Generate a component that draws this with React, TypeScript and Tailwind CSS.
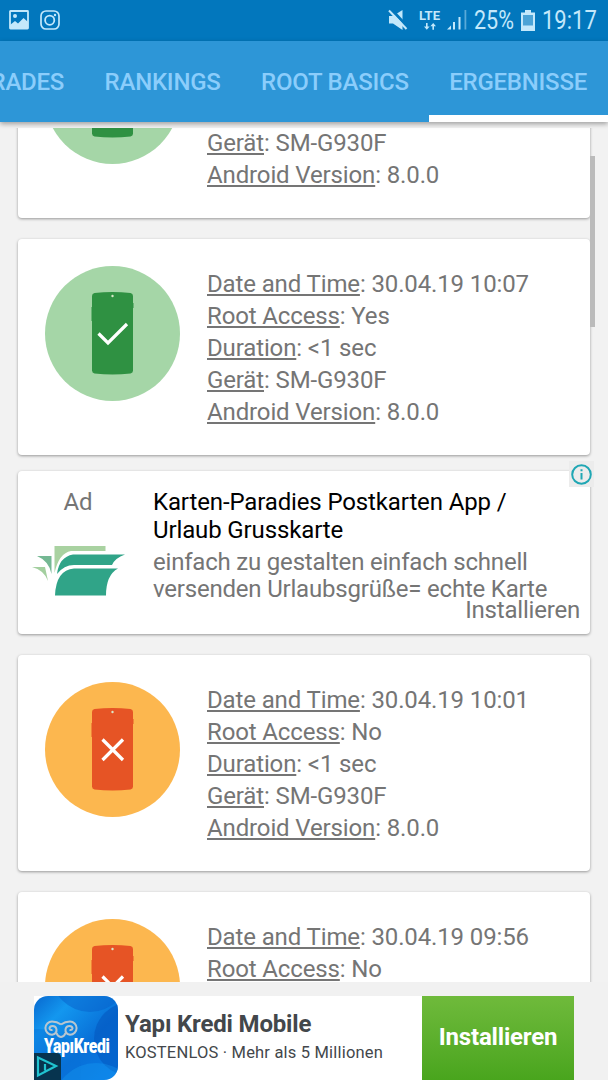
import clsx from 'clsx'

interface Result {
  date: string
  root: boolean
}

interface ResultCardProps {
  result: Result
  className?: string
}

const tabs = ['UPGRADES', 'RANKINGS', 'ROOT BASICS', 'ERGEBNISSE']

const results: Result[] = [
  { date: '30.04.19 10:09', root: true },
  { date: '30.04.19 10:07', root: true },
  { date: '30.04.19 10:01', root: false },
  { date: '30.04.19 09:56', root: false },
]

const cardClass = 'shrink-0 rounded-[4px] bg-white shadow-[0_1px_3px_rgba(0,0,0,0.38)]'

function StatusBar() {
  return (
    <header className="flex h-[41px] shrink-0 items-center bg-[#0277bd] pb-px pl-[9px] pr-[11px] text-[#c3e8fb]">
      <svg className="h-5 w-5" viewBox="0 0 20 20" fill="none">
        <rect x="1" y="1" width="18" height="17.5" rx="0.5" stroke="currentColor" strokeWidth="1.8" />
        <circle cx="6" cy="6" r="2" fill="currentColor" />
        <path d="M1 15 6 11l3 2.5L14.500 8 19 12v6.500H1Z" fill="currentColor" />
      </svg>
      <svg className="ml-[11px] h-5 w-5" viewBox="0 0 20 20" fill="none" stroke="currentColor">
        <rect x="1" y="1" width="18" height="18" rx="5" strokeWidth="1.7" />
        <circle cx="9.700" cy="10.200" r="4.600" strokeWidth="1.800" />
        <circle cx="15" cy="5" r="1.200" fill="currentColor" stroke="none" />
      </svg>

      <div className="ml-auto flex items-center">
        <svg className="h-[22px] w-5" viewBox="0 0 20 22">
          <path d="M1 7h4l9.500-6v20L5 14.500H1Z" fill="currentColor" />
          <path d="M3 0 20 18.500" stroke="#0277bd" strokeWidth="3" />
          <path d="M1 1.500 18.500 20" stroke="currentColor" strokeWidth="2" />
        </svg>
        <div className="ml-[10px] flex w-[23px] flex-col items-center">
          <span className="text-[13px] font-bold leading-[11px]">LTE</span>
          <svg className="mt-[2px] h-[7px] w-3" viewBox="0 0 12 7" fill="currentColor">
            <path d="M2 0h1.600v3.500h2L2.800 6.800 0 3.500h2ZM8.400 6.800H10V3.300h2L9.200 0 6.400 3.300h2Z" />
          </svg>
        </div>
        <svg className="ml-[5px] h-5 w-[21px]" viewBox="0 0 21 20" fill="currentColor">
          <path d="M1 19.500 5 15.500v4ZM7 12h2v7.500H7ZM12.500 7h2v12.500h-2Z" />
          <path d="M18.500 0h1.800v19.500h-1.800Z" opacity="0.45" />
        </svg>
        <span className="ml-[7px] w-[41px] whitespace-nowrap pt-[2px] text-[25px] leading-[38px]">
          <span className="inline-block origin-left scale-x-[0.86]">25%</span>
        </span>
        <svg className="ml-[6px] h-[21px] w-[14px]" viewBox="0 0 14 21">
          <path d="M4 0h6v2.500h4V21H0V2.500h4Z" fill="currentColor" />
          <path d="M2 5h10v10.500H2Z" fill="#4ba3d6" />
        </svg>
        <span className="ml-[7px] w-[55px] whitespace-nowrap pt-[2px] text-[25px] leading-[38px]">
          <span className="inline-block origin-left scale-x-[0.88]">19:17</span>
        </span>
      </div>
    </header>
  )
}

function TabBar() {
  return (
    <nav className="relative z-10 flex h-[81px] shrink-0 justify-end bg-[#2d96d7] shadow-[0_2px_5px_rgba(0,0,0,0.35)]">
      {tabs.map((tab, i) => (
        <div
          key={tab}
          className={clsx(
            'flex shrink-0 items-center justify-center whitespace-nowrap border-b-[7px] pl-5 pt-[7px] text-[24px] font-medium tracking-[-0.24px] text-[#8bcdfb]',
            i === tabs.length - 1 ? 'border-white pr-[21px]' : 'border-transparent pr-[20.5px]'
          )}
        >
          {tab}
        </div>
      ))}
    </nav>
  )
}

function PhoneBadge({ root }: { root: boolean }) {
  return (
    <svg className="h-[135px] w-[135px] shrink-0" viewBox="0 0 135 135">
      <circle cx="67.5" cy="67.5" r="67.5" fill={root ? '#a5d6a7' : '#fcb74f'} />
      <g fill={root ? '#2f9142' : '#e65425'}>
        <path d="M47 30q0-2.500 2.500-2.900 18-2.200 36 0 2.500.4 2.500 2.900v74.500q0 2.500-2.500 2.900-18 2.200-36 0-2.500-.4-2.500-2.900Z" />
        <path d="M46.500 41h1v14h-1ZM87.500 37h1v5h-1Z" />
      </g>
      <circle cx="67.500" cy="30" r="1.200" fill="#d9e8c8" />
      <path
        d={root ? 'M53.500 67.500 63 77 82 58' : 'M57.500 57.500 78 78M78 57.500 57.500 78'}
        fill="none"
        stroke="#fff"
        strokeWidth="3.2"
      />
    </svg>
  )
}

function ResultCard({ result, className }: ResultCardProps) {
  const rows = [
    ['Date and Time', result.date],
    ['Root Access', result.root ? 'Yes' : 'No'],
    ['Duration', '<1 sec'],
    ['Gerät', 'SM-G930F'],
    ['Android Version', '8.0.0'],
  ]

  return (
    <article className={clsx(cardClass, 'flex h-[216px] gap-[27px] p-[27px]', className)}>
      <PhoneBadge root={result.root} />
      <div className="pt-[2px] text-[24px] leading-8 tracking-[-0.13px] text-[#757575]">
        {rows.map(([label, value]) => (
          <p key={label} className="whitespace-nowrap">
            <span className="underline decoration-[1.5px] underline-offset-[2px]">{label}</span>: {value}
          </p>
        ))}
      </div>
    </article>
  )
}

function NativeAd() {
  return (
    <article className={clsx(cardClass, 'relative mt-4 flex h-[163px]')}>
      <div className="w-[135px] shrink-0 pl-[14px] pt-[15px]">
        <p className="w-[92px] text-center text-[24px] leading-8 text-[#757575]">Ad</p>
        <svg className="mt-[27px] h-[52px] w-[94px]" viewBox="0 0 94 52">
          <path d="M22.500 1H73.500V6H39Q27 8 22.500 28Z" fill="#a9d2a1" />
          <path d="M5 11h14.500v18Q17 16 5 11Z" fill="#74b893" />
          <path d="M0 22h13l3 14Q12 25 0 22Z" fill="#a3cf9f" />
          <path d="M25 29Q27 12 41 9.500H93Q83 13 80 20H42Q32 20 25 29Z" fill="#30a488" />
          <path d="M23 50.500Q24 25 42 23.500H86Q74 30 74 50.500Z" fill="#30a488" />
        </svg>
      </div>
      <div className="text-[24px]">
        <h2 className="whitespace-nowrap pt-[17px] leading-7 tracking-[-0.13px] text-black">
          Karten-Paradies Postkarten App /<br />
          Urlaub Grusskarte
        </h2>
        <p className="mt-[5px] whitespace-nowrap leading-[27px] tracking-[-0.2px] text-[#757575]">
          einfach zu gestalten einfach schnell
          <br />
          versenden Urlaubsgrüße= echte Karte
        </p>
      </div>
      <button className="absolute bottom-2 right-[10px] text-[24px] leading-8 tracking-[-0.2px] text-[#757575]">
        Installieren
      </button>
      <span className="absolute -right-1 -top-[10px] flex h-[26px] w-[25px] items-center justify-center bg-[#ececec]">
        <svg className="h-[21px] w-[21px]" viewBox="0 0 21 21" fill="none" stroke="#20a7b4" strokeWidth="2">
          <circle cx="10.500" cy="10.500" r="9.300" />
          <path d="M10.500 9v6.500M10.500 5.200v2" />
        </svg>
      </span>
    </article>
  )
}

function AppLogo() {
  return (
    <div className="relative h-[84px] w-[84px] shrink-0">
      <svg className="h-full w-full" viewBox="0 0 84 84">
        <defs>
          <linearGradient id="blue" x1="0" y1="0" x2="1" y2="1">
            <stop offset="0" stopColor="#0868cf" />
            <stop offset="0.25" stopColor="#1397ef" />
            <stop offset="0.6" stopColor="#0870d8" />
            <stop offset="1" stopColor="#087be6" />
          </linearGradient>
          <clipPath id="tile">
            <rect width="84" height="84" rx="14" />
          </clipPath>
        </defs>
        <g clipPath="url(#tile)">
          <rect width="84" height="84" fill="url(#blue)" />
          <circle cx="56" cy="-23" r="39" fill="#075fc9" opacity="0.5" />
          <circle cx="97" cy="43" r="37" fill="#0455be" opacity="0.55" />
          <circle cx="5" cy="75" r="42" fill="#0870d6" opacity="0.45" />
          <circle cx="62" cy="110" r="43" fill="#19a4f8" opacity="0.3" />
        </g>
        {/* ram horns */}
        <g fill="none" stroke="#b8c6d0" strokeWidth="2">
          <path d="M27 28.500Q23 25.500 18 25.500A6.600 6.600 0 0 0 18 38.700Q23 38 22.500 33.500 22 30 18.500 30 15.500 30 15.500 32.500 16 34.500 18.500 34" />
          <path d="M27 28.500Q31 25.500 36 25.500A6.600 6.600 0 0 1 36 38.700Q31 38 31.500 33.500 32 30 35.500 30 38.500 30 38.500 32.500 38 34.500 35.500 34" />
          <path d="M22.500 37Q23.500 40.500 27 41 30.500 40.500 31.500 37" />
        </g>
        <path d="M0 57h22q5 0 5 5v22H0Z" fill="#07344f" />
        <path d="M4 61.500 22 70 4 79.500ZM11 68v6.500" fill="none" stroke="#20c3d0" strokeWidth="2.200" />
      </svg>
      <span className="absolute left-[10px] top-[39px] origin-left scale-x-[0.79] whitespace-nowrap text-[20px] font-black leading-[22px] tracking-[-0.5px] text-white">
        YapıKredi
      </span>
    </div>
  )
}

function BannerAd() {
  return (
    <footer className="flex h-[98px] shrink-0 bg-[#f1f1f1] pl-[34px] pt-[14px]">
      <div className="flex w-[540px] bg-white">
        <AppLogo />
        <div className="flex-1 whitespace-nowrap pl-[7px] pt-[12px] text-[#43474b]">
          <p className="text-[24px] font-bold leading-8 tracking-[-0.18px]">Yapı Kredi Mobile</p>
          <p className="text-[16.5px] leading-[25px] tracking-[0.19px]">KOSTENLOS · Mehr als 5 Millionen</p>
        </div>
        <button className="w-[152px] bg-linear-to-b from-[#6fba3b] to-[#49a51d] pb-[2px] text-[24px] font-bold tracking-[-0.18px] text-white">
          Installieren
        </button>
      </div>
    </footer>
  )
}

export default function App() {
  return (
    <div className="flex h-[1080px] w-[608px] flex-col overflow-hidden bg-[#f2f2f2] font-[Roboto,'Liberation_Sans',sans-serif]">
      <StatusBar />
      <TabBar />
      <main className="relative min-h-0 flex-1 pt-[6px]">
        <div className="flex h-full flex-col overflow-hidden px-[18px]">
          <ResultCard result={results[0]} className="-mt-[126px]" />
          <ResultCard result={results[1]} className="mt-[21px]" />
          <NativeAd />
          <ResultCard result={results[2]} className="mt-[21px]" />
          <ResultCard result={results[3]} className="mt-[21px]" />
        </div>
        {/* scroll position indicator */}
        <div className="absolute right-[13px] top-[34px] h-[171px] w-[5px] bg-[#bbbbbb]" />
      </main>
      <BannerAd />
    </div>
  )
}
